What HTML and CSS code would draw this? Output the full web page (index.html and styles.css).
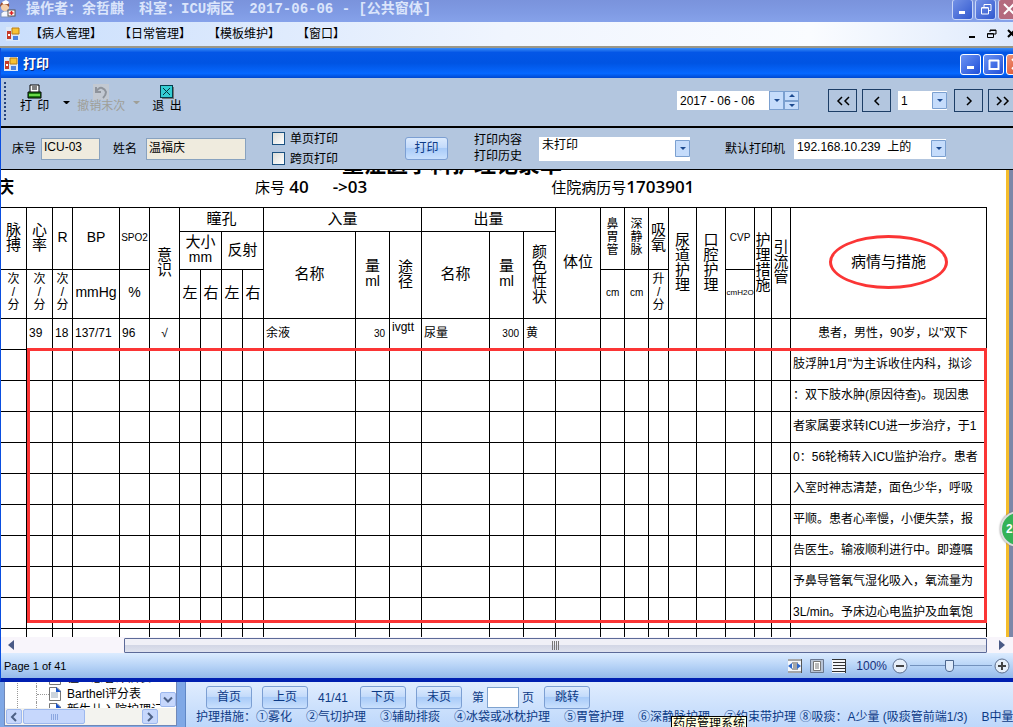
FILE: index.html
```
<!DOCTYPE html>
<html lang="zh-CN">
<head>
  <meta charset="UTF-8" />
  <meta name="viewport" content="width=device-width, initial-scale=1.0"/>
  <title>打印</title>
  <link rel="stylesheet" href="styles.css">
</head>
<body>
  <header class="app-title">
    <svg class="app-icon" width="16" height="18" viewBox="0 0 16 18">
      <path d="M1 17v-4l3-2h4l3 3v3z" fill="#f4f8ff" stroke="#7d93bd"/>
      <circle cx="5" cy="7" r="4" fill="#f5cfa8"/>
      <path d="M0 6q1-5 6-4 4 1 3 5-2-3-5-3-2 0-4 3z" fill="#9a4b2c"/>
      <path d="M2 2l4-2 3 2-1 2H3z" fill="#fff"/>
      <rect x="8" y="10" width="7" height="6" fill="#fff" stroke="#555"/>
      <path d="M11.500 11v4M9.500 13h4" stroke="#d22" stroke-width="1.500"/>
    </svg>
    <span>操作者：余哲麒</span><span>科室：ICU病区</span><span>2017-06-06 - [公共窗体]</span>
    <div class="win-buttons">
      <button class="win-btn" aria-label="最小化"><svg width="14" height="14"><path d="M3 10.500h6" stroke="#fff" stroke-width="3"/></svg></button>
      <button class="win-btn" aria-label="还原"><svg width="14" height="14" fill="none" stroke="#fff"><path d="M5 5V2.500h7v6h-2.500"/><path d="M2.500 6h7v6h-7zM2.500 5.500h7"/></svg></button>
      <button class="win-btn close" aria-label="关闭"><svg width="14" height="14"><path d="M2 2l10 10M12 2L2 12" stroke="#fff" stroke-width="2"/></svg></button>
    </div>
  </header>

  <nav class="menu">
    <svg width="14" height="14" viewBox="0 0 14 14"><rect width="14" height="14" fill="#dce8f8"/><path d="M1 4h4v8H1z" fill="#c53a28"/><path d="M2 7h2v2H2z" fill="#fff"/><path d="M6 1h7v6H6z" fill="#f8c232" stroke="#b87d16"/><path d="M7 9h5v4H7z" fill="#4b82df"/></svg>
    <a href="#">【病人管理】</a>
    <a href="#">【日常管理】</a>
    <a href="#">【模板维护】</a>
    <a href="#">【窗口】</a>
    <div class="mdi-buttons">
      <button aria-label="最小化"><svg width="10" height="10"><path d="M2 8h6" stroke="#000" stroke-width="2"/></svg></button>
      <button aria-label="还原"><svg width="10" height="10" fill="none" stroke="#000"><path d="M3 3V1h6v4H7M3 1.500h6"/><path d="M.5 4.500h6v4h-6zM.5 5h6"/></svg></button>
      <button aria-label="关闭"><svg width="10" height="10"><path d="M1 1l7 7M8 1L1 8" stroke="#000" stroke-width="2"/></svg></button>
    </div>
  </nav>

  <main class="window">
    <div class="window-title">
      <svg width="14" height="14" viewBox="0 0 14 14"><rect width="14" height="14" fill="#dce8f8"/><path d="M1 4h4v8H1z" fill="#c53a28"/><path d="M2 7h2v2H2z" fill="#fff"/><path d="M6 1h7v6H6z" fill="#f8c232" stroke="#b87d16"/><path d="M7 9h5v4H7z" fill="#4b82df"/></svg>
      <h1>打印</h1>
      <div class="win-buttons">
        <button class="win-btn bright" aria-label="最小化"><svg width="14" height="14"><path d="M3 10.500h7" stroke="#fff" stroke-width="3"/></svg></button>
        <button class="win-btn bright" aria-label="最大化"><svg width="14" height="14"><path d="M2 3.500h10M2.500 3v9h9V3" fill="none" stroke="#fff" stroke-width="2"/></svg></button>
        <button class="win-btn bright close" aria-label="关闭"><svg width="14" height="14"><path d="M2 2l10 10M12 2L2 12" stroke="#fff" stroke-width="2"/></svg></button>
      </div>
    </div>

    <div class="toolbar">
      <div class="grip"></div>
      <button class="tool">
        <svg width="16" height="16" viewBox="0 0 16 16"><path d="M3 8V1h9v7" fill="#fff" stroke="#000"/><path d="M5 3h5M5 5h5" stroke="#000"/><path d="M1 8h13v6H1z" fill="#1b7a12" stroke="#000"/><path d="M2 11h11" stroke="#69d847" stroke-width="2"/></svg>
        打 印
      </button>
      <button class="drop" aria-label="打印选项"></button>
      <button class="tool" disabled>
        <svg width="16" height="16" viewBox="0 0 16 16"><rect width="16" height="16" fill="#c3c9d2"/><path d="M3 3v5h5M3 8q3-5 6-4t4 4q0 3-3 6" fill="none" stroke="#8f949c" stroke-width="2"/></svg>
        撤销末次
      </button>
      <button class="drop" aria-label="撤销选项" disabled></button>
      <button class="tool">
        <svg width="16" height="16" viewBox="0 0 16 16"><path d="M3 3h12v12H3z" fill="#777"/><rect x="1.500" y="1.500" width="12" height="12" fill="#35cdd2" stroke="#063c4c"/><path d="M4 4l7 7M11 4l-7 7" stroke="#06323e"/></svg>
        退 出
      </button>
      <div class="pager">
        <div class="date-box">
          <input type="text" value="2017 - 06 - 06" aria-label="日期">
          <button class="arrow" aria-label="选择日期"></button>
          <div class="spin"><button class="arrow up" aria-label="增加"></button><button class="arrow" aria-label="减少"></button></div>
        </div>
        <button class="page-btn" aria-label="第一页"><svg width="14" height="10"><path d="M6 1L2 5l4 4M13 1L9 5l4 4"/></svg></button>
        <button class="page-btn" aria-label="前一页"><svg width="14" height="10"><path d="M9 1L5 5l4 4"/></svg></button>
        <select class="page-select" aria-label="页码"><option>1</option></select>
        <button class="page-btn" aria-label="后一页"><svg width="14" height="10"><path d="M5 1l4 4-4 4"/></svg></button>
        <button class="page-btn" aria-label="最后一页"><svg width="14" height="10"><path d="M1 1l4 4-4 4M8 1l4 4-4 4"/></svg></button>
      </div>
    </div>

    <form class="filters">
      <label for="bed">床号</label><input class="field bed" id="bed" type="text" value="ICU-03" readonly>
      <label for="name">姓名</label><input class="field name" id="name" type="text" value="温福庆" readonly>
      <div class="checks">
        <label><input type="checkbox">单页打印</label>
        <label><input type="checkbox">跨页打印</label>
      </div>
      <button class="btn print" type="button">打印</button>
      <label class="history" for="history">打印内容<br>打印历史</label>
      <select class="history-select" id="history"><option>未打印</option></select>
      <label class="printer" for="printer">默认打印机</label>
      <select class="printer-select" id="printer"><option>192.168.10.239&nbsp; 上的</option></select>
    </form>

    <section class="sheet">
      <h2>重症医学科护理记录单</h2>
      <div class="patient">
        <b>庆</b>
        <span class="p-bed">床号 <b>40</b></span>
        <b class="p-move">-&gt;03</b>
        <span class="p-id">住院病历号<b>1703901</b></span>
      </div>
      <div class="record">
        <table>
          <colgroup>
            <col class="w26"><col class="w26"><col class="w20"><col class="w47"><col class="w30"><col class="w30">
            <col class="w21"><col class="w21"><col class="w21"><col class="w21">
            <col class="w92"><col class="w34"><col class="w32">
            <col class="w68"><col class="w34"><col class="w32">
            <col class="w45"><col class="w24"><col class="w24"><col class="w20"><col class="w28"><col class="w29"><col class="w29"><col class="w17"><col class="w19">
            <col>
          </colgroup>
          <thead>
            <tr class="r1">
              <th rowspan="2">脉<br>搏</th>
              <th rowspan="2">心<br>率</th>
              <th rowspan="2" class="mid">R</th>
              <th rowspan="2" class="mid">BP</th>
              <th rowspan="2" class="tiny">SPO2</th>
              <th rowspan="3">意<br>识</th>
              <th colspan="4">瞳孔</th>
              <th colspan="3">入量</th>
              <th colspan="3">出量</th>
              <th rowspan="3">体位</th>
              <th rowspan="2" class="small">鼻<br>胃<br>管</th>
              <th rowspan="2" class="small">深<br>静<br>脉</th>
              <th rowspan="2">吸<br>氧</th>
              <th rowspan="3">尿<br>道<br>护<br>理</th>
              <th rowspan="3">口<br>腔<br>护<br>理</th>
              <th rowspan="2" class="tiny">CVP</th>
              <th rowspan="3">护<br>理<br>措<br>施</th>
              <th rowspan="3">引<br>流<br>管</th>
              <th rowspan="3"><span class="circled">病情与措施</span></th>
            </tr>
            <tr class="r2">
              <th colspan="2">大小<br><span class="mid">mm</span></th>
              <th colspan="2">反射</th>
              <th rowspan="2">名称</th>
              <th rowspan="2">量<br><span class="mid">ml</span></th>
              <th rowspan="2">途<br>径</th>
              <th rowspan="2">名称</th>
              <th rowspan="2">量<br><span class="mid">ml</span></th>
              <th rowspan="2">颜<br>色<br>性<br>状</th>
            </tr>
            <tr class="r3">
              <th class="small">次<br>/<br>分</th>
              <th class="small">次<br>/<br>分</th>
              <th class="small">次<br>/<br>分</th>
              <th class="mid">mmHg</th>
              <th class="mid">%</th>
              <th>左</th><th>右</th><th>左</th><th>右</th>
              <th class="tiny">cm</th>
              <th class="tiny">cm</th>
              <th class="small">升<br>/<br>分</th>
              <th class="micro">cmH2O</th>
            </tr>
          </thead>
          <tbody id="rows"></tbody>
        </table>
        <div class="mark"></div>
      </div>
    </section>

    <div class="hscroll">
      <svg width="6" height="10"><path d="M6 0v10L0 5z" fill="#4a5a86"/></svg>
      <div class="thumb"><i></i><i></i><i></i><i></i></div>
      <svg width="6" height="10"><path d="M0 0v10l6-5z" fill="#4a5a86"/></svg>
    </div>

    <footer class="status">
      <span>Page 1 of 41</span>
      <div class="view">
        <button aria-label="页宽"><svg width="14" height="14"><path d="M0 0h14v14H0z" fill="#f5f7fa"/><path d="M0 1h14M0 13h14M4 4h6M4 10h6M5 6h4M5 8h4M13.500 0v14" stroke="#555"/><path d="M0 7l4-3v6zM13 7l-4-3v6z" fill="#2f69cc"/></svg></button>
        <button aria-label="整页"><svg width="14" height="14"><path d="M.5.5h13v13H.5z" fill="#b9c4d6" stroke="#68768f"/><path d="M3.500 2.500h7v9h-7z" fill="#fff" stroke="#777"/><path d="M5 5h4M5 7h4M5 9h4" stroke="#777"/></svg></button>
        <button aria-label="连续"><svg width="14" height="14"><path d="M0 0h14v14H0z" fill="#f5f7fa"/><path d="M0 .5h14M1 3.500h12M1 6.500h12M1 9.500h12M0 12.500h14M13.500 0v14" stroke="#333"/></svg></button>
        <span class="zoom-value">100%</span>
        <button aria-label="缩小"><svg width="16" height="16"><circle cx="8" cy="8" r="7" fill="#e6effa" stroke="#5d6f8f"/><path d="M4 8h8" stroke="#444" stroke-width="2"/></svg></button>
        <input type="range" min="0" max="100" value="48" aria-label="缩放">
        <button aria-label="放大"><svg width="16" height="16"><circle cx="8" cy="8" r="7" fill="#e6effa" stroke="#5d6f8f"/><path d="M4 8h8M8 4v8" stroke="#444" stroke-width="2"/></svg></button>
      </div>
    </footer>
  </main>

  <section class="behind">
    <div class="tree">
      <div class="tree-body">
        <ul>
          <li>住立患者评估表</li>
          <li>Barthel评分表</li>
          <li>新生儿入院护理记录</li>
        </ul>
        <button class="xp-btn down" aria-label="向下"><svg width="10" height="8"><path d="M1 1.500l4 4 4-4"/></svg></button>
      </div>
      <div class="tree-scroll">
        <button class="xp-btn" aria-label="向左"><svg width="8" height="10"><path d="M6 1L2 5l4 4"/></svg></button>
        <div class="xp-thumb"><i></i><i></i><i></i><i></i></div>
        <button class="xp-btn right" aria-label="向右"><svg width="8" height="10"><path d="M2 1l4 4-4 4"/></svg></button>
      </div>
    </div>
    <div class="care">
      <div class="care-pages">
        <button class="btn">首页</button>
        <button class="btn">上页</button>
        <span>41/41</span>
        <button class="btn">下页</button>
        <button class="btn">末页</button>
        <label>第<input type="text" aria-label="页码">页</label>
        <button class="btn jump">跳转</button>
      </div>
      <div class="care-items">
        <span>护理措施：①雾化</span>
        <span>②气切护理</span>
        <span>③辅助排痰</span>
        <span>④冰袋或冰枕护理</span>
        <span>⑤胃管护理</span>
        <span>⑥深静脉护理</span>
        <span>⑦约束带护理 ⑧吸痰：A少量 (吸痰管前端1/3)</span>
        <span>B中量</span>
      </div>
    </div>
    <div class="tooltip">药房管理系统</div>
  </section>

  <div class="ball">2</div>

  <script>
    const first = ["", "39", "18", "137/71", "96", "√", "", "", "", "", "余液", "30", "ivgtt", "尿量", "300", "黄"];
    const notes = [
      "患者，男性，90岁，以\"双下",
      "肢浮肿1月\"为主诉收住内科，拟诊",
      "：双下肢水肿(原因待查)。现因患",
      "者家属要求转ICU进一步治疗，于1",
      "0：56轮椅转入ICU监护治疗。患者",
      "入室时神志清楚，面色少华，呼吸",
      "平顺。患者心率慢，小便失禁，报",
      "告医生。输液顺利进行中。即遵嘱",
      "予鼻导管氧气湿化吸入，氧流量为",
      "3L/min。予床边心电监护及血氧饱",
      ""
    ];
    const classes = { 5: "center", 11: "num", 12: "top", 14: "num" };
    const body = document.getElementById("rows");

    notes.forEach((note, row) => {
      const tr = document.createElement("tr");
      for (let i = 0; i < 25; i++) {
        const td = document.createElement("td");
        if (row === 0) {
          td.textContent = first[i] || "";
          if (classes[i]) td.className = classes[i];
        }
        tr.appendChild(td);
      }
      const last = document.createElement("td");
      last.textContent = note;
      last.className = row === 0 ? "note indent" : "note";
      tr.appendChild(last);
      body.appendChild(tr);
    });
  </script>
</body>
</html>
```
FILE: styles.css
```
* {
  box-sizing: border-box;
}

body {
  margin: 0;
  height: 100vh;
  display: flex;
  flex-direction: column;
  overflow: hidden;
  position: relative;
  font-family: "Liberation Sans", "Noto Sans CJK SC", sans-serif;
  font-size: 12px;
  line-height: 16px;
  color: #000;
  background: #bfd7f8;
}

button, input, select {
  font: inherit;
  color: inherit;
  margin: 0;
  padding: 0;
  border: 0;
  border-radius: 0;
  background: none;
}

button {
  display: flex;
  align-items: center;
  justify-content: center;
  flex-shrink: 0;
}

svg {
  display: block;
  flex-shrink: 0;
}

/* outer application frame */
.app-title {
  display: flex;
  align-items: center;
  gap: 15px;
  height: 22px;
  padding-bottom: 4px;
  flex-shrink: 0;
  background: linear-gradient(#7a93dc, #809be4 60%, #86a2ea);
  color: #dbe5fb;
  font-family: "Liberation Mono", "Noto Sans CJK SC", monospace;
  font-size: 14px;
  font-weight: bold;
  white-space: nowrap;
}

.app-title .app-icon {
  margin-right: -5px;
}

.win-buttons {
  display: flex;
  gap: 2px;
  margin-left: auto;
  margin-right: -6px;
}

.window-title .win-buttons {
  margin-right: -14px;
}

.win-btn {
  width: 21px;
  height: 21px;
  border: 1px solid #c8d6f8;
  border-radius: 3px;
  background: linear-gradient(135deg, #7391e6, #3158cf);
}

.win-btn.bright {
  border-color: #fff;
  background: linear-gradient(135deg, #6d94f3, #1f4fd9);
}

.win-btn.close {
  background: #b46a7e;
}

.win-btn.bright.close {
  background: linear-gradient(135deg, #f0967c, #d8401a);
}

.menu {
  display: flex;
  align-items: center;
  gap: 17px;
  height: 26px;
  padding-left: 6px;
  flex-shrink: 0;
  border-bottom: 2px solid #9b9788;
  background: linear-gradient(90deg, #c9defc, #f0f5fe 50%, #fafcff 80%, #dfeafc);
}

.menu > svg {
  margin-right: -7px;
}

.menu a {
  color: #000;
  text-decoration: none;
}

.mdi-buttons {
  display: flex;
  gap: 10px;
  margin-left: auto;
  margin-right: -4px;
}

/* print window */
.window {
  flex: 1;
  min-height: 0;
  display: flex;
  flex-direction: column;
  border-left: 1px solid #0a4ee0;
  border-bottom: 4px solid #001fb0;
}

.window-title {
  display: flex;
  align-items: center;
  gap: 5px;
  height: 30px;
  padding: 2px 0 0 3px;
  flex-shrink: 0;
  background: linear-gradient(#3a8df8, #0456e6 15%, #0054e3 50%, #0668ff 85%, #0048cf);
}

.window-title h1 {
  margin: 0;
  font-size: 13px;
  color: #fff;
  text-shadow: 1px 1px #0a2a80;
}

.toolbar {
  display: flex;
  align-items: center;
  height: 50px;
  padding: 0 0 3px 3px;
  flex-shrink: 0;
  border-bottom: 2px solid #000;
  background: #b3c6df;
}

.grip {
  height: 38px;
  border-left: 2px dotted #24427c;
  margin-right: 14px;
}

.tool {
  flex-direction: column;
  line-height: 13px;
  word-spacing: 2px;
  padding-bottom: 4px;
}

.tool:disabled {
  color: #9f9f98;
}

.drop {
  width: 7px;
  border: 3px solid transparent;
  border-top-color: #000;
  border-bottom: 0;
  margin: 4px 7px 0 14px;
}

.drop:disabled {
  border-top-color: #9f9f98;
  margin: 4px 12px 0 8px;
}

.pager {
  display: flex;
  align-items: center;
  gap: 5px;
  margin-left: auto;
  margin-right: -4px;
}

.date-box {
  display: flex;
  width: 122px;
  height: 19px;
  margin-right: 24px;
  background: #fff;
}

.date-box input {
  flex: 1;
  min-width: 0;
  padding-left: 3px;
}

.arrow {
  width: 15px;
  border: 1px solid #7ba0d0;
  background: #c5dcfb;
}

.arrow::before {
  content: "";
  border: 3px solid transparent;
  border-top-color: #1c4a90;
  border-bottom: 0;
}

.arrow.up::before {
  border-top: 0;
  border-bottom: 3px solid #1c4a90;
}

.spin {
  display: flex;
  flex-direction: column;
}

.spin .arrow {
  flex: 1;
}

.page-btn {
  width: 29px;
  height: 23px;
  border: 1px solid #1d3e66;
}

.page-btn svg {
  fill: none;
  stroke: #000;
  stroke-width: 1.5;
}

select {
  appearance: none;
  padding-left: 3px;
  background: #fff url("data:image/svg+xml,%3Csvg xmlns='http://www.w3.org/2000/svg' width='15' height='17'%3E%3Cpath d='M.5.5h14v16H.5z' fill='%23c5dcfb' stroke='%237ba0d0'/%3E%3Cpath d='M5 7h6L8 10z' fill='%231c4a90'/%3E%3C/svg%3E") right center no-repeat;
}

.page-select {
  width: 49px;
  height: 19px;
  margin: 0 2px;
}

.filters {
  display: flex;
  align-items: center;
  height: 42px;
  padding-left: 11px;
  flex-shrink: 0;
  border-bottom: 1px solid #000;
  background: #b3c6df;
  white-space: nowrap;
}

.field {
  height: 22px;
  padding: 0 2px 4px;
  border: 1px solid #88a2bf;
  background: #efebde;
}

.bed {
  width: 59px;
  margin: 0 13px 0 5px;
}

.name {
  width: 100px;
  margin: 0 26px 0 9px;
}

.checks {
  display: flex;
  flex-direction: column;
  gap: 4px;
}

.checks label {
  display: flex;
  align-items: center;
  gap: 5px;
}

.checks input {
  appearance: none;
  width: 13px;
  height: 13px;
  border: 1px solid #1c5180;
  background: linear-gradient(135deg, #dcdcd7, #fff);
}

.btn {
  width: 46px;
  height: 23px;
  border: 1px solid #7c9fd3;
  border-radius: 3px;
  background: linear-gradient(#dceafd, #c4dbfb 45%, #a9cbf8 50%, #c9e0fd);
  color: #0c3a86;
  padding-bottom: 2px;
}

.btn.print {
  width: 43px;
  margin: 0 26px 0 67px;
}

.history {
  padding-bottom: 2px;
}

.history-select {
  width: 151px;
  height: 24px;
  padding-bottom: 8px;
  margin: 0 35px 0 17px;
}

.printer-select {
  width: 152px;
  height: 20px;
  padding-bottom: 3px;
  margin-left: 9px;
}

/* printed record */
.sheet {
  flex: 1;
  min-height: 0;
  overflow: hidden;
  background: #fff;
  border-right: 4px solid #7c87a8;
  box-shadow: inset -3px 0 #f5bd2c;
}

.sheet h2 {
  margin: -17px 0 0 341px;
  font-size: 22px;
  line-height: 24px;
  white-space: nowrap;
}

.patient {
  display: flex;
  height: 30px;
  padding-top: 1px;
  margin-left: -4px;
  font-size: 15px;
  line-height: 18px;
  white-space: nowrap;
}

.patient b {
  font-family: "Open Sans", "Noto Sans CJK SC", sans-serif;
  font-size: 17px;
  font-weight: 600;
}

.p-bed {
  margin-left: 241px;
}

.p-move {
  margin-left: 24px;
}

.p-id {
  margin-left: 184px;
}

.record {
  position: relative;
  margin-right: 22px;
}

table {
  width: 100%;
  table-layout: fixed;
  border-collapse: separate;
  border-spacing: 0;
  border-top: 1px solid #000;
}

th, td {
  padding: 0;
  border-right: 1px solid #000;
  border-bottom: 1px solid #000;
  white-space: nowrap;
}

th {
  padding-bottom: 3px;
  font-size: 15px;
  font-weight: normal;
  line-height: 15px;
}

.mid {
  font-size: 14px;
}

.small {
  font-size: 12px;
  line-height: 13px;
}

.tiny {
  font-size: 10px;
}

.micro {
  font-size: 8px;
}

.r1 {
  height: 24px;
}

.r2 {
  height: 38px;
}

.r3 {
  height: 49px;
}

td {
  height: 31px;
  padding: 0 0 2px 2px;
}

td.num {
  padding: 0 4px 0 0;
  font-size: 10px;
  text-align: right;
}

td.center {
  padding: 0 0 3px;
  text-align: center;
}

td.top {
  vertical-align: top;
}

td.note {
  padding-left: 2px;
}

td.indent {
  padding-left: 27px;
}

.w17 { width: 17px; }
.w19 { width: 19px; }
.w20 { width: 20px; }
.w21 { width: 21px; }
.w24 { width: 24px; }
.w26 { width: 26px; }
.w28 { width: 28px; }
.w29 { width: 29px; }
.w30 { width: 30px; }
.w32 { width: 32px; }
.w34 { width: 34px; }
.w45 { width: 45px; }
.w47 { width: 47px; }
.w68 { width: 68px; }
.w92 { width: 92px; }

.circled {
  position: relative;
}

.circled::after {
  content: "";
  position: absolute;
  inset: -18px -22px -19px;
  border: 3px solid #fb3535;
  border-radius: 50%;
}

.mark {
  position: absolute;
  top: 141px;
  left: 26px;
  right: 0;
  height: 275px;
  border: 3px solid #fb3535;
}

.hscroll {
  display: flex;
  align-items: center;
  height: 16px;
  padding: 0 8px 0 7px;
  flex-shrink: 0;
  background: #f8f5fb;
}

.thumb {
  flex: 1;
  display: flex;
  align-items: center;
  justify-content: center;
  gap: 1px;
  height: 15px;
  margin: 0 12px 0 110px;
  border: 1px solid #5c6a98;
  border-radius: 1px;
  background: linear-gradient(#f0f0f7 50%, #d3d7e6 50%, #dfe2ee);
}

.thumb i {
  width: 1px;
  height: 9px;
  background: #777;
}

.status {
  display: flex;
  align-items: center;
  justify-content: space-between;
  height: 25px;
  padding: 0 3px;
  flex-shrink: 0;
  font-size: 11px;
  background: linear-gradient(#dcecff, #b8d4f7 50%, #94b9ea);
}

.view {
  display: flex;
  align-items: center;
  gap: 8px;
}

.zoom-value {
  color: #16307c;
  margin: 0 -3px 0 2px;
  font-size: 12px;
}

.view input {
  appearance: none;
  width: 82px;
  height: 12px;
  margin: 0 -6px;
  background: linear-gradient(#7391bd, #7391bd) center / 100% 1px no-repeat;
}

.view input::-webkit-slider-thumb {
  appearance: none;
  width: 9px;
  height: 12px;
  border: 1px solid #4d678f;
  border-radius: 1px 1px 5px 5px;
  background: #dfeafa;
}

/* windows that show below */
.behind {
  position: relative;
  display: flex;
  height: 45px;
  flex-shrink: 0;
  padding-left: 4px;
  background: #7fa8e6;
}

.tree {
  display: flex;
  flex-direction: column;
  width: 173px;
  height: 44px;
  flex-shrink: 0;
  border: 1px solid #7088b8;
  border-top: 0;
  background: #fff;
}

.tree-body {
  display: flex;
  height: 26px;
  overflow: hidden;
}

.tree ul {
  flex: 1;
  min-width: 0;
  height: 60px;
  margin: -12px 0 0 12px;
  padding: 0;
  list-style: none;
  border-left: 1px dotted #999;
  white-space: nowrap;
  overflow: hidden;
}

/* the document icon sits between the branch line and the text */
.tree li {
  display: flex;
  align-items: center;
  height: 16px;
  margin-left: 18px;
  border-left: 1px dotted #999;
  background: url("data:image/svg+xml,%3Csvg xmlns='http://www.w3.org/2000/svg' width='12' height='14'%3E%3Cpath d='M.5.5H8l3.500 3.500v9.500H.5z' fill='%23fff' stroke='%23777'/%3E%3Cpath d='M7 0l5 5H7z' fill='%231c55c8'/%3E%3Cpath d='M2 6h7M2 8h7M2 10h7' stroke='%239ab'/%3E%3C/svg%3E") 12px center no-repeat;
  text-indent: 18px;
}

.tree li::before {
  content: "";
  width: 12px;
  flex-shrink: 0;
  border-top: 1px dotted #999;
}

.xp-btn {
  width: 16px;
  height: 15px;
  border: 1px solid #9db8ee;
  border-radius: 2px;
  background: #c6d7fc;
}

.xp-btn svg {
  fill: none;
  stroke: #4d6185;
  stroke-width: 2;
}

.xp-btn.down {
  margin-top: 10px;
}

.tree-scroll {
  display: flex;
  gap: 1px;
  height: 17px;
  padding: 1px 18px 1px 1px;
  background: #f3f3ef;
}

.xp-thumb {
  display: flex;
  align-items: center;
  justify-content: center;
  gap: 1px;
  width: 62px;
  border: 1px solid #9db8ee;
  border-radius: 2px;
  background: #c6d7fc;
}

.xp-thumb i {
  width: 1px;
  height: 6px;
  background: #8ca7e0;
}

.xp-btn.right {
  margin-left: auto;
}

.care {
  flex: 1;
  min-width: 0;
  margin-left: 8px;
  padding: 4px 0 0 10px;
  overflow: hidden;
  border-left: 1px solid #5f87c6;
  background: linear-gradient(#e0edfe, #bdd7fb);
  color: #0c3a86;
  white-space: nowrap;
}

.care-pages {
  display: flex;
  align-items: center;
  gap: 10px;
  padding-left: 10px;
}

.care-pages span {
  margin-right: 2px;
}

.care-pages label {
  display: flex;
  align-items: center;
  gap: 3px;
}

.care-pages input {
  width: 32px;
  height: 21px;
  border: 1px solid #7fa3cf;
  background: #fff;
}

.care-items {
  display: flex;
  gap: 14px;
}

.tooltip {
  position: absolute;
  left: 671px;
  top: 34px;
  height: 18px;
  padding: 0 1px;
  border: 1px solid #000;
  background: #ffffe1;
  line-height: 15px;
  white-space: nowrap;
}

.ball {
  position: absolute;
  right: -23px;
  top: 511px;
  width: 36px;
  height: 36px;
  padding-left: 4px;
  border: 2px solid #ddd;
  border-radius: 50%;
  background: #35b257;
  box-shadow: 0 0 2px #777;
  color: #fff;
  font-weight: bold;
  line-height: 32px;
}
```
